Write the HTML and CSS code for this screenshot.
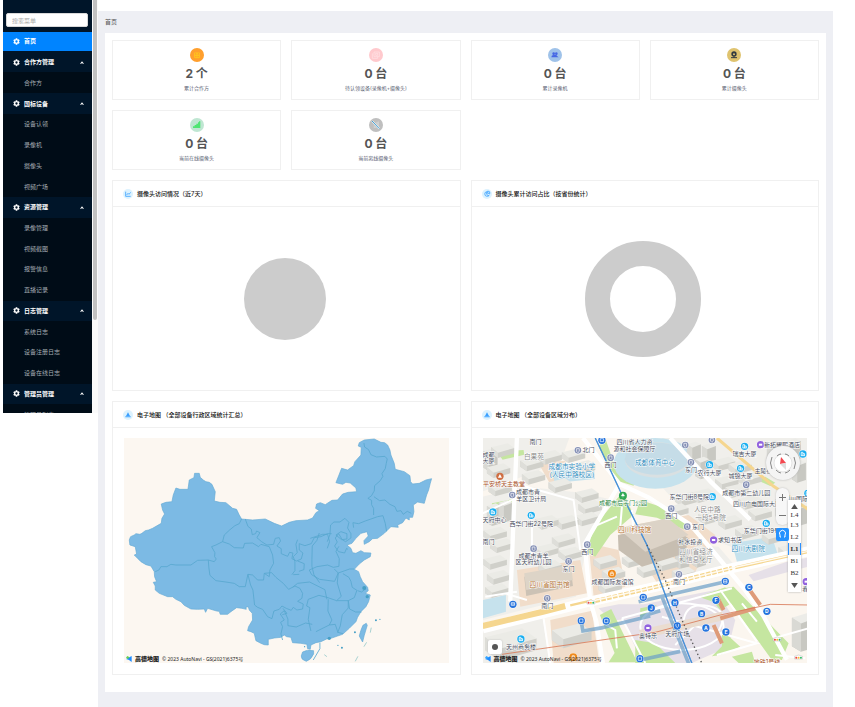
FILE: index.html
```html
<!DOCTYPE html>
<html lang="zh-CN">
<head>
<meta charset="utf-8">
<title>首页</title>
<link rel="stylesheet" href="styles.css">
</head>
<body>
<svg class="defs" aria-hidden="true">
  <defs>
    <symbol id="gear" viewBox="0 0 24 24"><path fill-rule="evenodd" d="M9.500 1h5l.8 3.300 1.800 1 3.200-1 2.500 4.400-2.400 2.300v2l2.400 2.300-2.500 4.400-3.200-1-1.800 1-.8 3.300h-5l-.8-3.300-1.800-1-3.200 1-2.500-4.400L3.600 13v-2L1.200 8.700l2.500-4.400 3.200 1 1.800-1zM12 8a4 4 0 1 0 0 8 4 4 0 0 0 0-8z"/></symbol>
    <symbol id="caret" viewBox="0 0 10 6"><path d="M0 6 5 0l5 6H7L5 4 3 6z"/></symbol>
    <g id="bld"><path fill="#d0d0ca" d="M0 12v18l20 14 50-14V14z"/><path fill="#dedeD9" d="M0 12v18l20 14V28z"/><path fill="#ebebe6" d="M0 12 50 0l20 14-50 14z"/></g>
    <g id="tower"><path fill="#c8c8c2" d="M0 8v50l16 10 26-8V8z"/><path fill="#d9d9d4" d="M0 8v50l16 10V18z"/><path fill="#ececE8" d="M0 8 26 0l16 8-26 10z"/></g>
    <g id="poi"><circle r="11.500" fill="#fff"/><circle r="10" fill="#8590b5"/><path d="M-4-5h8V3l-4 4-4-4z" fill="none" stroke="#fff" stroke-width="2"/></g>
    <g id="hotel"><circle r="12.500" fill="#fff"/><circle r="11" fill="#18aef0"/><path d="M-5 5v-10h5v10m0-6h5v6m-11 0h12" fill="none" stroke="#fff" stroke-width="2.500"/></g>
    <g id="exit"><circle r="12.500" fill="#fff"/><circle r="11" fill="#2674dd"/></g>
    <g id="shop"><circle r="12" fill="#fff"/><circle r="11" fill="#9161dd"/><path d="M-5-3h10v6h-10z" fill="#fff"/></g>
    <g id="food"><circle r="13" fill="#fff"/><circle r="12" fill="#ef8a1c"/><path d="M-5-1h10v6h-10zM-3-1v-4h6v4" fill="none" stroke="#fff" stroke-width="2"/></g>
    <g id="light"><path fill="#fff" stroke="#999" d="M-12-4q12-8 24 0v8h-24z"/><circle cx="-7" r="3" fill="#e44"/><circle r="3" fill="#fb3"/><circle cx="7" r="3" fill="#3b6"/></g>
  </defs>
</svg>

<aside class="sidebar">
  <div class="menu">
    <div class="search"><input type="search" placeholder="搜索菜单" aria-label="搜索菜单"></div>
    <nav>
      <a class="top active" href="#"><svg><use href="#gear"/></svg>首页</a>
      <a class="top" href="#"><svg><use href="#gear"/></svg>合作方管理<svg class="caret"><use href="#caret"/></svg></a>
      <a href="#">合作方</a>
      <a class="top" href="#"><svg><use href="#gear"/></svg>国标设备<svg class="caret"><use href="#caret"/></svg></a>
      <a href="#">设备认领</a>
      <a href="#">录像机</a>
      <a href="#">摄像头</a>
      <a href="#">视频广场</a>
      <a class="top" href="#"><svg><use href="#gear"/></svg>资源管理<svg class="caret"><use href="#caret"/></svg></a>
      <a href="#">录像管理</a>
      <a href="#">视频截图</a>
      <a href="#">报警信息</a>
      <a href="#">直播记录</a>
      <a class="top" href="#"><svg><use href="#gear"/></svg>日志管理<svg class="caret"><use href="#caret"/></svg></a>
      <a href="#">系统日志</a>
      <a href="#">设备注册日志</a>
      <a href="#">设备在线日志</a>
      <a class="top" href="#"><svg><use href="#gear"/></svg>管理员管理<svg class="caret"><use href="#caret"/></svg></a>
      <a href="#">管理员列表</a>
    </nav>
  </div>
  <div class="track"><div class="thumb"></div></div>
</aside>

<main>
  <div class="crumb">首页</div>
  <div class="content">
    <section class="stats">
      <div class="stat">
        <svg viewBox="0 0 42 42"><circle cx="21" cy="21" r="21" fill="#ff9f2d"/><path d="M14 14v15h14V14M17 12l4 6 4-6M15 22h12M21 18v11" fill="none" stroke="#ffc61d" stroke-width="3"/></svg>
        <strong>2 个</strong><span>累计合作方</span>
      </div>
      <div class="stat">
        <svg viewBox="0 0 42 42"><circle cx="21" cy="21" r="21" fill="#ffc9cd"/><path d="M15 12h16v14H15zM10 16v15h16v-5M20 16h6v6h-6z" fill="none" stroke="#ffecee" stroke-width="1.500"/></svg>
        <strong>0 台</strong><span>待认领设备(录像机+摄像头)</span>
      </div>
      <div class="stat">
        <svg viewBox="0 0 42 42"><circle cx="21" cy="21" r="21" fill="#9fc2e9"/><g fill="#4667e4"><circle cx="17" cy="17" r="4"/><circle cx="25" cy="17" r="4"/><path d="M10 28q0-7 7-7h6q4 0 5 4l4 3z"/></g></svg>
        <strong>0 台</strong><span>累计录像机</span>
      </div>
      <div class="stat">
        <svg viewBox="0 0 42 42"><circle cx="21" cy="21" r="21" fill="#dfc36f"/><circle cx="21" cy="18" r="8" fill="#333a40"/><circle cx="21" cy="19" r="3" fill="#dfc36f"/><path d="M12 29h18M21 25v5" stroke="#333a40" stroke-width="3"/></svg>
        <strong>0 台</strong><span>累计摄像头</span>
      </div>
      <div class="stat">
        <svg viewBox="0 0 42 42"><circle cx="21" cy="21" r="21" fill="#bfe6d2"/><path d="M9 30v-5h5v-4h5v-4h5v-4h3v-3h4v20z" fill="#4fe573"/></svg>
        <strong>0 台</strong><span>当前在线摄像头</span>
      </div>
      <div class="stat">
        <svg viewBox="0 0 42 42"><circle cx="21" cy="21" r="21" fill="#bfbfbf"/><path d="M14 30V20l10 10zM20 14l10-4v17z" fill="#d0d0d0"/><path d="m9 9 22 23" stroke="#fff" stroke-width="5"/><path d="m9 9 22 23" stroke="#3d9bd0" stroke-width="3"/></svg>
        <strong>0 台</strong><span>当前离线摄像头</span>
      </div>
    </section>

    <section class="panels">
      <article class="panel">
        <h2><svg viewBox="0 0 30 30"><circle cx="15" cy="15" r="15" fill="#dcf2fe"/><path d="M8 8v14h15M11 18l4-5 3 3 5-6" fill="none" stroke="#1890ff" stroke-width="2"/></svg>摄像头访问情况（近7天）</h2>
        <div class="chart"><svg class="pie" viewBox="0 0 82 82"><circle cx="41" cy="41" r="41" fill="#ccc"/></svg></div>
      </article>
      <article class="panel">
        <h2><svg viewBox="0 0 30 30"><circle cx="15" cy="15" r="15" fill="#dcf2fe"/><path d="M14 8a7 7 0 1 0 8 9M14 8v8l6 5M17 6v7h7q0-7-7-7z" fill="none" stroke="#1890ff" stroke-width="2"/></svg>摄像头累计访问占比（按省份统计）</h2>
        <div class="chart"><svg class="donut" viewBox="0 0 116 116"><circle cx="58" cy="58" r="45.500" fill="none" stroke="#ccc" stroke-width="25"/></svg></div>
      </article>

      <article class="panel">
        <h2><svg viewBox="0 0 30 30"><circle cx="15" cy="15" r="15" fill="#dcf2fe"/><path d="M15 7 9 18h12zM7 19h16v3H7z" fill="#3aa0ff"/></svg>电子地图 （全部设备行政区域统计汇总）</h2>
        <div class="map country">
          <svg class="canvas" viewBox="24 24 974 675" preserveAspectRatio="xMidYMid slice">
            <g fill="#7cbae4" stroke="#65abd5" stroke-width="2" stroke-linejoin="round">
              <path d="M40 330 44 320 55 315 60 311 72 313 78 310 88 302 98 300 110 295 136 280 138 265 146 252 140 240 136 222 150 217 168 215 172 195 180 174 192 178 216 178 218 165 220 150 234 143 236 130 250 130 253 142 262 150 270 155 280 157 288 163 298 185 295 213 312 217 330 218 350 235 362 238 370 255 377 267 410 270 448 267 475 280 497 288 520 277 540 272 575 270 590 264 600 248 610 242 599 235 602 222 613 218 628 224 648 211 665 210 680 192 697 187 722 185 720 174 703 159 690 157 680 163 660 158 668 138 677 115 695 120 713 107 717 95 735 75 736 52 727 48 730 38 745 30 775 27 795 37 806 38 815 45 822 60 825 75 835 100 838 118 865 125 882 137 884 155 890 162 910 160 930 150 947 146 943 160 938 180 932 195 925 220 905 216 892 225 894 245 890 262 880 262 880 270 870 264 860 278 845 285 847 292 825 290 805 310 785 325 770 326 760 335 745 343 744 332 757 318 753 305 743 308 735 310 720 325 708 340 693 345 705 355 710 368 720 370 735 362 745 368 765 369 763 380 745 390 730 402 715 418 728 425 733 440 740 455 755 472 757 482 748 490 763 495 758 515 750 530 735 545 725 562 720 575 700 595 680 613 665 618 645 625 632 627 615 635 600 638 585 645 583 658 575 656 573 643 555 640 530 638 525 622 512 620 505 615 495 622 475 624 457 628 457 645 445 644 435 640 420 632 415 610 405 605 395 602 398 590 410 570 409 550 400 540 397 530 390 532 391 538 378 535 362 533 345 545 335 553 313 553 310 544 302 543 275 535 269 547 265 537 245 538 225 537 205 526 195 515 180 508 170 500 155 500 150 498 130 490 118 480 118 468 112 457 122 455 116 440 115 425 105 408 90 404 75 395 66 386 55 375 62 372 58 350 42 345z"/>
              <path d="M560 666q12-8 33-4v10q-8 18-22 22-16-5-15-16z"/>
              <path d="m741 586 10-6 3 6-9 30-5 20-10-18q4-17 11-32z"/>
            </g>
            <g fill="none" stroke="#58a7cf" stroke-width="2.500" stroke-linejoin="round">
              <path d="M377 267 370 281 357 287 341 300 325 315 320 335 300 345 287 350 297 368 296 380 301 387 295 395 277 390 245 391 225 405 180 405 165 403 153 410 135 410 129 420 118 425M277 390 279 414 282 436 300 452 330 456 355 460 370 470 388 470 396 433 410 435 425 450 443 450 445 430 460 440 462 420 473 400 470 375 460 350 435 343 428 350 410 339 386 340 382 354 355 353 340 342 320 335"/>
              <path d="m388 267 8 22 10 8 3 17 10-3 3-8 10 5-9 15 14 12 16 10 20-2 5-18 12-2 4 10-11 15 13 8 0 15 19 8 6-12 10 2-3 17 14 7 14-6 5-18-11-9 0-19 17 6 19-6 9-18 20-3 20-9 12 0"/>
              <path d="M396 433 404 465 411 480 416 525 425 532 440 538 455 560 468 566 474 543 490 538 498 528 511 535 526 541 532 532 543 540 560 537 562 522 545 514 558 505 560 490 552 475 537 468 518 478 502 460 480 442 467 428 445 430"/>
              <path d="m500 630-5-18 5-22-6-13 11-7-12-18 12-10 11 25 0 20 25 4 28-12 20 4M501 535l12 15-14 4m29-120 9-12 0-27-5-15 12-12-4-25 5-14m0 64 20 8-1 18-15 5m61-115-7 22-14 17-1 40 0 21 6 25 17 24M532 434l18-1M580 420l23-10 32-5 17 7 17-3 1-23-10-22 9-15"/>
              <path d="m583 325 37-12 15 0 6 22-7 20m0-20 8-21 2-29 10-9 18 0 15-11 12 12-4 17 10 17 0 13-16 11-10-6-11-18-10 13 6 12-8 12 12 17 18 4 6-14 4 3"/>
              <path d="m660 315 15-10 18 6 0 16-16 2zM713 293l-2-15 17 3 20-8 37-13 16-3 7 23 4 24M773 255l0-20-6-11 0-13-11-6 11-8 7-13m1 0 1-17 17-15 8-13-3-8 10-15 3-16 3-13-7-8-25 2-17-7-7-15-12-8-2-12M774 200l17 12 16-2 15 13 15 7 6 14 12-2 7 11 12-9 12 6"/>
              <path d="m580 420 7 14 24 14 45 6 11-25 20-7 14-5 14 0M667 429l-12-12m12 12-3 30 12 40-14 13-29-10-24-6-32 12-5 20 10 5-5 35 8 35m27 35 0 18-20 34M600 605l40-20 18-2 8 24 15 4M637 508l-1 35 12 27-8 15m22-73 35 0 0 22-18 20-6 34-8 20M697 512l18-9 8-22-14-9-4-18-6-12-18-11M697 512l4 25 18 9 18 0M725 482l12 4 13-10M633 508l-6-29-46-23-36 4-15 12"/>
            </g>
            <g fill="#469fc5"><circle cx="745" cy="474" r="6"/><circle cx="754" cy="500" r="5"/><circle cx="717" cy="607" r="3"/><circle cx="780" cy="571" r="3"/><circle cx="792" cy="568" r="2"/><circle cx="640" cy="625" r="5"/><circle cx="666" cy="646" r="2"/><circle cx="678" cy="653" r="3"/><circle cx="566" cy="650" r="2"/></g>
            <g stroke="#a9d2d2" stroke-width="3"><path d="m763 608 3-15m-22 57 8-13m-34 57 8-15m-101-5 8 6"/></g>
          </svg>
          <div class="credit"><svg viewBox="0 0 18 18"><path fill="#1e8bff" d="M17 0 0 9l9 3 8 6z"/><path fill="#67cf57" d="m0 5 4-5 7 4-6 5z"/></svg><b>高德地图</b><span>© 2023 AutoNavi - GS(2021)6375号</span></div>
        </div>
      </article>

      <article class="panel">
        <h2><svg viewBox="0 0 30 30"><circle cx="15" cy="15" r="15" fill="#dcf2fe"/><path d="M15 7 9 18h12zM7 19h16v3H7z" fill="#3aa0ff"/></svg>电子地图 （全部设备区域分布）</h2>
        <div class="map city">
          <svg class="canvas" viewBox="22 114 976 675" preserveAspectRatio="xMidYMid slice">
            <path fill="#fbf6ef" d="M22 114h980v680H22z"/>
            <g fill="#f0efeb"><path d="M22 114h260l-25 70-150 60-85 30zM22 290l130-30 180 20 80 20-75 130-35 160-280 70zM560 114h440v350l-120 20L690 410 560 260zM22 690l180-40 20 139H22zM610 430l120 10 60 70-200 45-60-110z"/></g>
            <g fill="#f1ddca"><path d="m125 510 190-30 20 100-200 40zM190 190l80-8 20 60-60 20zM420 385l220-40 80 60-60 110-110 40-60-90zM225 660l125-28 22 157H235zM340 430l90 20 20 110-95 30z"/></g>
            <g fill="#c5e6a0"><path d="m370 140 20-25 30 85 60 45-5 12-50-15zM430 290l-80 100-25 60 35 20 45-65 70-60-25-55zM495 300l75 25 65 42 25 13-35 8-80-35-65-10zM50 310l60-12 0 17-60 14zM65 155l80-5 2 14-65 15zM845 240l25-10 30 18-15 10z"/></g>
            <g fill="#c6e2ed"><path d="m225 200 130-15 4 52-120 12zM22 600l70-15 0 50-70 20zM770 430l120-20 20 60-125 15z"/><ellipse cx="540" cy="190" rx="125" ry="76"/></g>
            <ellipse cx="545" cy="180" rx="96" ry="53" fill="#d9e0e2"/><ellipse cx="545" cy="176" rx="96" ry="48" fill="#c5dce7"/>
            <path fill="#e6e0e8" d="m430 628 290-58 60 90-20 80-110 49H500zM820 525l110-38 70-15v28l-165 44zM370 625l60-12 110 0 20 25-150 25z"/>
            <path fill="#c5e6a0" d="m374 645 34-18 78 160H400l18-28zM670 590l80-28 25 44-40 24-20-24zM495 625l50-10-50 45zM480 720l60 10 60 59H480zM745 565l30-5 165 170-20 50h-30L760 600zM740 690l55 50-60 25-25 4 30-30zM770 770l60-15 10 34h-50z"/>

            <g>
              <use href="#tower" x="25" y="145"/><use href="#bld" x="48" y="130"/><use href="#bld" x="35" y="190"/><use href="#bld" x="40" y="245"/><use href="#bld" x="135" y="170"/><use href="#bld" x="140" y="210"/><use href="#bld" x="190" y="150"/><use href="#bld" x="260" y="145"/><use href="#bld" x="290" y="180"/><use href="#bld" x="220" y="235"/><use href="#bld" x="300" y="265"/><use href="#bld" x="310" y="300"/><use href="#bld" x="300" y="335"/><use href="#bld" x="240" y="345"/><use href="#bld" x="180" y="345"/><use href="#bld" x="230" y="400"/><use href="#bld" x="180" y="430"/><use href="#bld" x="250" y="440"/><use href="#tower" x="35" y="310"/><use href="#tower" x="70" y="300"/><use href="#bld" x="25" y="380"/><use href="#bld" x="45" y="415"/><use href="#bld" x="25" y="465"/><use href="#bld" x="35" y="510"/><use href="#bld" x="30" y="550"/><use href="#bld" x="190" y="480"/>
              <use href="#bld" x="355" y="465"/><use href="#bld" x="380" y="500"/><use href="#bld" x="370" y="540"/><use href="#bld" x="440" y="460"/><use href="#bld" x="485" y="490"/>
              <use href="#tower" x="635" y="125"/><use href="#tower" x="680" y="130"/><use href="#tower" x="660" y="170"/><use href="#bld" x="710" y="170"/><use href="#bld" x="760" y="180"/><use href="#bld" x="790" y="215"/><use href="#bld" x="720" y="225"/><use href="#bld" x="750" y="250"/><use href="#bld" x="600" y="275"/><use href="#bld" x="570" y="310"/><use href="#bld" x="650" y="265"/><use href="#bld" x="670" y="330"/><use href="#bld" x="730" y="345"/><use href="#bld" x="790" y="285"/><use href="#bld" x="820" y="320"/><use href="#bld" x="860" y="390"/><use href="#bld" x="780" y="375"/><use href="#tower" x="950" y="180"/><use href="#tower" x="900" y="290"/><use href="#tower" x="955" y="310"/><use href="#tower" x="875" y="120"/><use href="#tower" x="935" y="115"/><use href="#tower" x="600" y="440"/><use href="#tower" x="650" y="435"/><use href="#bld" x="540" y="470"/><use href="#bld" x="590" y="500"/><use href="#bld" x="910" y="430"/>
              <use href="#tower" transform="translate(950 640) scale(1.700)"/>
              <use href="#bld" transform="translate(30 685) scale(2.200)"/><use href="#bld" transform="translate(230 670) scale(1.700)"/>
            </g>
            <g><path fill="#ccc2b5" d="m147 530 140-22 6 50-140 30z"/><path fill="#ddd4c7" d="m147 520 140-25 6 45-140 30z"/><path fill="#c7beb1" d="m428 405 150-30 62 40-10 45-130 40-70-50z"/><path fill="#dcd3c7" d="m428 385 150-30 62 50-130 50z"/></g>

            <g fill="none" stroke="#fff" stroke-width="13" stroke-linejoin="round">
              <path d="m323 114 110 138-105 180 17 172 18 60 20 125M433 252l90 42 122 80 60 70 100 120 60 85 70 130M585 114l120 130 120 115M125 114l-10 240-10 250"/>
            </g>
            <path fill="none" stroke="#fff" stroke-width="30" d="m22 685 178-44 150-38 190-42 230-57 230-50"/>
            <g fill="none" stroke="#fff" stroke-width="6"><path d="m155 600-60-18M205 655l20 134M315 450l-20-150-180-50M22 340l100-45M30 590l95-15M170 375v120M350 595l150-35M440 655l330-90M440 655l70 134M735 570l110 155M560 650l285 80-120 35M600 735l65-65M895 715l105-30M385 670l35 20 5 55M800 610l45 55M990 775l-90-10M425 350l-70 30-20 60M470 330l5 70M440 320l-5 60"/><ellipse cx="620" cy="680" rx="125" ry="70"/><path d="M625 660q10-55 75-42t30 75"/></g>
            <g fill="none" stroke="#f5d68f"><path stroke-width="18" d="m22 678 178-42 70-18"/><path stroke-width="7" d="M285 616l65-15"/><path stroke-width="12" stroke-dasharray="14 4" d="m360 603 180-42 230-57"/><path stroke-width="9" d="m725 114 170 145 105 70M780 503l220-48"/></g>
            <path fill="none" stroke="#fffaf0" stroke-width="4" d="m350 603 190-42 230-57 230-50"/>

            <path fill="#eadccf" d="m490 690 250-55 8 25-240 55z"/>
            <g fill="none" stroke="#de9b79" stroke-width="12"><path d="m735 655 105-30M820 565l35 50M725 590l20 40M715 675l25 55"/></g>
            <g fill="none" stroke="#699ec8" stroke-width="11" opacity=".7"><path d="m318 665 5 28 60-10M380 683l145-35M490 605l260-60M495 650l60-18M560 590l80 200M495 780l120-26"/></g>
            <path fill="none" stroke="#d97a58" stroke-width="2.500" d="m80 763 460-66 195-52 150-32 115 2"/>
            <path fill="none" stroke="#277bd0" stroke-width="4" d="m360 114 83 176 72 145 70 190 65 165"/>
            <path fill="none" stroke="#9cc7ee" stroke-width="1" d="m360 114 83 176 72 145 70 190 65 165"/>
            <path fill="none" stroke="#555" stroke-width="4" stroke-dasharray="4 8" d="m515 435 55 105 50 120 60 130"/>

            <g><use href="#poi" x="308" y="151"/><use href="#poi" x="406" y="173"/><use href="#poi" x="111" y="285"/><use href="#poi" x="336" y="434"/><use href="#poi" x="175" y="446"/><use href="#poi" x="280" y="484"/><use href="#poi" x="216" y="595"/><use href="#poi" x="647" y="187"/><use href="#poi" x="588" y="326"/><use href="#poi" x="636" y="380"/><use href="#poi" x="813" y="254"/><use href="#poi" x="611" y="523"/><use href="#poi" x="630" y="135"/><use href="#poi" x="710" y="120"/>
              <use href="#hotel" x="53" y="336"/><use href="#hotel" x="168" y="346"/><use href="#hotel" x="703" y="194"/><use href="#hotel" x="808" y="139"/><use href="#hotel" x="796" y="205"/><use href="#hotel" x="983" y="162"/><use href="#hotel" x="711" y="290"/><use href="#hotel" x="873" y="370"/><use href="#hotel" x="137" y="717"/><use href="#hotel" x="998" y="280"/>
              <use href="#shop" x="856" y="134"/><use href="#shop" x="715" y="420"/><use href="#shop" x="518" y="684"/><use href="#shop" x="993" y="545"/>
              <use href="#food" x="410" y="521"/><use href="#food" x="294" y="772"/><circle cx="443" cy="287" r="12" fill="#31a853"/><path d="m443 280-5 8h10zm0 7v6" fill="#fff" stroke="#fff"/><circle cx="74" cy="229" r="11" fill="#cf6e42"/><path d="m74 222-6 11h12z" fill="#fff"/>
              <use href="#light" x="347" y="608"/><use href="#light" x="906" y="719"/><use href="#light" x="970" y="773"/></g>
            <g class="exits"><use href="#exit" x="380" y="121"/><use href="#exit" x="113" y="613"/><use href="#exit" x="318" y="662"/><use href="#exit" x="393" y="663"/><use href="#exit" x="504" y="592"/><use href="#exit" x="528" y="624"/><use href="#exit" x="599" y="608"/><use href="#exit" x="722" y="601"/><use href="#exit" x="750" y="544"/><use href="#exit" x="821" y="562"/><use href="#exit" x="875" y="634"/><use href="#exit" x="679" y="641"/><use href="#exit" x="692" y="684"/><use href="#exit" x="752" y="696"/><use href="#exit" x="606" y="678"/><use href="#exit" x="494" y="776"/>
              <g fill="none" stroke="#fff" stroke-width="2"><path d="M375 116h10v9h-10zM108 608h10v8h-10zm0 4h10M313 657h10v10h-10zM388 658h10v10h-10zM499 587h10v10h-10zM745 539h10v10h-10zm0 5h10M489 771h10v10h-10zM602 672v7q4 7 8 0v-7"/></g>
              <text x="528" y="630">J</text><text x="599" y="614">H</text><text x="722" y="607">F</text><text x="821" y="568">C</text><text x="875" y="640">D</text><text x="679" y="647">B</text><text x="692" y="690">A</text><text x="752" y="702">E</text></g>

            <g class="labels">
              <text x="181" y="131">南门</text><text x="478" y="133">四川省人力资</text><text x="478" y="153">源和社会保障厅</text><text x="340" y="157">北门</text><text x="40" y="170">成都</text><text x="40" y="190">大厦</text><text x="406" y="201">西门</text>
              <text x="158" y="282">成都市青</text><text x="168" y="302">羊区卫计局</text><text x="58" y="367">天府中心</text><text x="168" y="377">西华门街22号院</text><text x="40" y="433">南门</text><text x="175" y="473">成都市青羊</text><text x="175" y="493">区天府幼儿园</text><text x="280" y="514">东门</text><text x="336" y="462">西门</text><text x="412" y="553">成都国际友谊馆</text><text x="216" y="623">南门</text><text x="137" y="747">天州商务楼</text>
              <text x="920" y="141">新拓耀熙酒店</text><text x="808" y="169">瑞吉大厦</text><text x="703" y="225">农行大厦</text><text x="796" y="233">城锦大厦</text><text x="865" y="220">主陵街</text><text x="647" y="215">东门</text><text x="813" y="284">成都市第二幼儿园</text><text x="642" y="297">东华门街8号院</text><text x="845" y="318">四川广电国际大厦</text><text x="588" y="355">西门</text><text x="668" y="386">东门</text><text x="860" y="400">东华门街19号</text><text x="764" y="426">求知书店</text><text x="645" y="433">补水投资</text><text x="611" y="551">南门</text><text x="606" y="707">天府广场</text><text x="518" y="715">奥特乐</text><text x="962" y="303">四川国际</text><text x="990" y="572">春</text>
              <g class="muted"><text x="176" y="178">白果苑</text><text x="696" y="337">人民中路</text><text x="706" y="361">一段5号院</text><text x="662" y="463">四川省经济</text><text x="662" y="487">和信息化厅</text></g>
              <g class="blue"><text x="290" y="207">成都市实验小学</text><text x="290" y="230">(人民中路校区)</text><text x="539" y="194">成都体育中心</text><text x="819" y="453">四川大剧院</text></g>
              <g class="tan"><text x="478" y="397">四川科技馆</text><text x="223" y="561">四川省图书馆</text></g>
              <text class="green" x="443" y="316">成都市后子门公园</text><text class="brown" x="86" y="257">平安桥天主教堂</text><text class="brown" x="875" y="793">地铁1号线</text>
            </g>
          </svg>
          <button class="compass" aria-label="指南针"><svg viewBox="0 0 34 34"><circle cx="17" cy="17" r="9" fill="#fff" stroke="#e3e3e3"/><path d="M6 11q-3 6 0 12M28 11q3 6 0 12M11 10q2-2 4-2M23 10q-2-2-4-2M10 24q3 3 5 3M24 24q-3 3-5 3" fill="none" stroke="#888"/><path fill="#f3474f" d="m15 11 5 6-6 1z"/><path fill="#ddd" d="m14 18 6-1 0 7z"/></svg></button>
          <div class="zoom"><button aria-label="放大"><svg viewBox="0 0 7 7"><path d="M0 3h7v1H0zM3 0h1v7H3z"/></svg></button><button aria-label="缩小"><svg viewBox="0 0 7 7"><path d="M0 3h7v1H0z"/></svg></button></div>
          <button class="indoor" aria-label="楼层"><svg viewBox="0 0 26 26"><path d="M10 18H8v-4a6 6 0 1 1 10 0v4h-2" fill="none" stroke="#fff" stroke-width="2"/></svg></button>
          <div class="floors"><button class="arrow" aria-label="上"><svg viewBox="0 0 8 6"><path d="m4 0 4 6H0z"/></svg></button><button class="cut">L4</button><button>L3</button><button>L2</button><button class="on">L1</button><button>B1</button><button>B2</button><button class="arrow" aria-label="下"><svg viewBox="0 0 8 6"><path d="M0 0h8L4 6z"/></svg></button></div>
          <button class="locate" aria-label="定位"></button>
          <div class="credit"><svg viewBox="0 0 18 18"><path fill="#1e8bff" d="M17 0 0 9l9 3 8 6z"/><path fill="#35a6ff" d="m0 5 4-5 7 4-6 5z"/></svg><b>高德地图</b><span>© 2023 AutoNavi - GS(2021)6375号</span></div>
        </div>
      </article>
    </section>
  </div>
</main>
</body>
</html>
```
FILE: styles.css
```css
* { box-sizing: border-box; }
body {
  margin: 0;
  display: flex;
  align-items: flex-start;
  min-height: 100vh;
  background: #fff;
  color: #333;
  font: 6px/10px Inter, "Noto Sans CJK SC", sans-serif;
}
.defs { position: absolute; width: 0; height: 0; }
button { padding: 0; border: 0; font: inherit; color: inherit; background: none; }

/* sidebar */
.sidebar { display: flex; flex: none; margin-left: 3px; height: 413px; overflow: hidden; }
.menu { width: 89px; background: #001529; }
.search { padding: 13px 4px 0 3px; height: 31px; }
.search input {
  display: block; width: 100%; height: 14px; padding: 0 5px;
  border: 1px solid #d9d9d9; border-radius: 2px; background: #fff; font: inherit;
}
.search input::placeholder { color: #aaa; opacity: 1; }
nav { display: grid; grid-auto-rows: 1fr; height: 394px; }
nav a {
  display: flex; align-items: center; padding-left: 21px;
  background: #000c17; color: #a6adb4; text-decoration: none;
}
nav .top { padding: 0 8px 0 10px; gap: 4px; background: #001529; color: #fff; font-weight: 700; }
nav .active { margin: 1px 0; background: #0084ff; }
nav svg { width: 7px; height: 7px; fill: #fff; }
nav .caret { width: 4px; height: 3px; margin-left: auto; }
.track { width: 6px; padding-left: 1px; background: #fafafa; }
.thumb { width: 4px; height: 320px; border-radius: 0 0 2px 2px; background: #c1c1c1; }

/* main area */
main {
  flex: 1; min-width: 0; margin: 11px 22px 0 0; padding: 0 7px 15px;
  background: #eeeff4;
}
.crumb { height: 22px; line-height: 22px; color: #555; }
.content { padding: 7px 7px 17px; background: #fff; }
.stats { display: grid; grid-template-columns: repeat(4, 1fr); gap: 10px; }
.stat {
  display: flex; flex-direction: column; align-items: center;
  height: 60px; padding-top: 7px; border: 1px solid #f0f0f0;
}
.stat svg { width: 14px; height: 14px; }
.stat strong { margin-top: 4px; font-size: 12px; line-height: 16px; color: #555; }
.stat span { margin-top: 1px; font-size: 5px; color: #596072; }
.panels { display: grid; grid-template-columns: repeat(2, 1fr); gap: 10px; margin-top: 10px; }
.panel { min-width: 0; border: 1px solid #f0f0f0; }
.panel h2 {
  display: flex; align-items: center; gap: 4px; height: 26px; margin: 0; padding: 0 10px;
  border-bottom: 1px solid #f0f0f0; font-size: 6px; font-weight: 500; color: #111;
}
.panel h2 svg { width: 10px; height: 10px; }
.chart { display: flex; align-items: center; justify-content: center; height: 183px; padding-right: 3px; }
.pie { width: 82px; height: 82px; }
.donut { width: 116px; height: 116px; }

/* maps */
.map { position: relative; height: 225px; margin: 10px 11px 11px; overflow: hidden; background: #fcf7f1; }
.canvas { display: block; width: 100%; height: 100%; }
.credit {
  position: absolute; left: 2px; bottom: 0; display: flex; align-items: center; gap: 3px;
  font: 5px/8px "Noto Sans", "Noto Sans CJK SC", sans-serif; color: #222; white-space: nowrap;
}
.credit svg { width: 6px; height: 6px; }
.credit b { font-size: 6px; font-weight: 900; }
.labels text { fill: #464b5a; stroke: #fff; stroke-width: 3px; paint-order: stroke; font-size: 18px; text-anchor: middle; }
.labels .muted text { fill: #8b8b8b; font-size: 20px; }
.labels .blue text { fill: #2f8dbd; font-size: 20px; }
.labels .tan text { fill: #b3702e; font-size: 20px; }
.labels .green { fill: #27833c; }
.labels .brown { fill: #a84f26; }
.exits text { fill: #fff; font-size: 15px; font-weight: 700; text-anchor: middle; }
.compass {
  position: absolute; top: 8px; right: 7px; width: 34px; height: 34px;
  border-radius: 50%; background: #f4f4f4; box-shadow: 0 0 2px #aaa;
}
.compass svg { display: block; }
.zoom {
  position: absolute; top: 50px; right: 18px; display: grid; grid-template-rows: 1fr 1fr;
  width: 13px; height: 37px; border-radius: 6px; background: #f7f7f7; box-shadow: 0 0 2px #bbb;
}
.zoom button { display: grid; place-items: center; }
.zoom svg { width: 7px; height: 7px; fill: #777; }
.floors {
  position: absolute; top: 62px; right: 6px; width: 13px; height: 92px;
  background: #fff; box-shadow: 0 0 2px #aaa; font: 7px/12px "Liberation Serif", serif;
}
.floors button { display: block; width: 100%; height: 12px; line-height: 12px; color: #333; text-align: center; }
.floors .arrow { display: grid; place-items: center; }
.floors .arrow svg { width: 7px; height: 5px; fill: #555; }
.floors .cut { height: 7px; line-height: 7px; }
.floors .on { border: solid #2b90ff; border-width: 0 1px; background: #e6e6e6; font-weight: 700; }
.indoor {
  position: absolute; top: 90px; right: 18px; z-index: 1; width: 13px; height: 13px;
  border-radius: 2px; background: #2592ff;
}
.indoor svg { display: block; }
.locate {
  position: absolute; left: 5px; bottom: 9px; width: 14px; height: 14px;
  border-radius: 2px; background: #fff; box-shadow: 0 0 2px #bbb;
}
.locate::before { content: ""; display: block; width: 6px; height: 6px; margin: auto; border-radius: 50%; background: #555; }
```
